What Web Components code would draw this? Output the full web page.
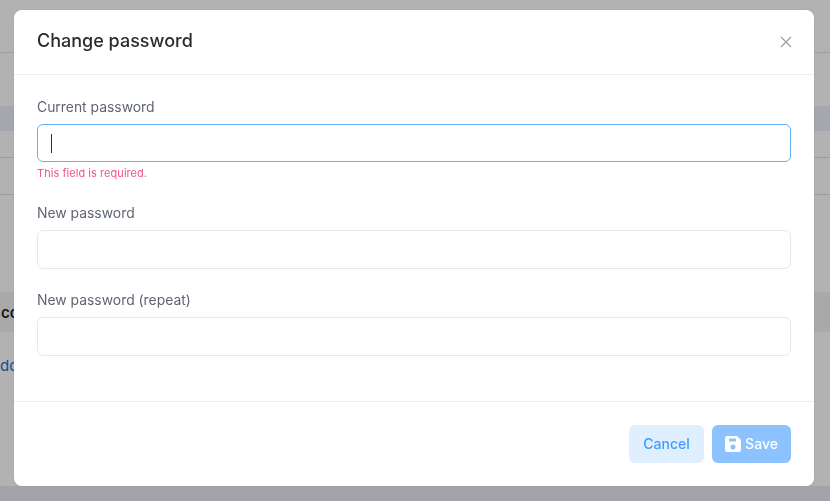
<!DOCTYPE html>
<html>
<head>
<meta charset="utf-8">
<title>Change password</title>
<style>
    html, body { margin: 0; height: 100%; overflow: hidden; }
    body { font-family: Inter, "Liberation Sans", sans-serif; background: #fff; }
</style>
</head>
<body>
<page-behind></page-behind>
<modal-dialog heading="Change password">
    <form-field label="Current password" error="This field is required." focused></form-field>
    <form-field label="New password"></form-field>
    <form-field label="New password (repeat)"></form-field>
    <app-button slot="footer" kind="light">Cancel</app-button>
    <app-button slot="footer" kind="primary" icon>Save</app-button>
</modal-dialog>

<script>
class PageBehind extends HTMLElement {
    constructor() {
        super();
        this.attachShadow({ mode: 'open' });
        this.shadowRoot.innerHTML = `
            <style>
                :host {
                    display: flex;
                    flex-direction: column;
                    height: 501px;
                    background: #fff;
                    overflow: hidden;
                }
                .nav { height: 52px; border-bottom: 1px solid #dfe3e6; }
                .gap { height: 53px; }
                .band { height: 25px; background: #edeff9; }
                .row { height: 26px; border-bottom: 1px solid #dfe3e6; }
                .row.tall { height: 36px; }
                .spacer { height: 97px; }
                .head {
                    height: 40px;
                    background: #f2f2f2;
                    display: flex;
                    align-items: center;
                    padding-left: 1px;
                    font: 600 15px Inter, sans-serif;
                    color: #222;
                }
                .link {
                    height: 154px;
                    padding: 24px 0 0 0;
                    box-sizing: border-box;
                    font: 15px/20px Inter, sans-serif;
                    color: #0f74d8;
                }
                .foot { flex: 1; background: #e9eaf3; }
            </style>
            <div class="nav"></div>
            <div class="gap"></div>
            <div class="band"></div>
            <div class="row"></div>
            <div class="row tall"></div>
            <div class="spacer"></div>
            <div class="head">co</div>
            <div class="link">do</div>
            <div class="foot"></div>
        `;
    }
}

class ModalDialog extends HTMLElement {
    constructor() {
        super();
        this.attachShadow({ mode: 'open' });
        this.shadowRoot.innerHTML = `
            <style>
                :host {
                    position: fixed;
                    inset: 0;
                    display: block;
                    background: rgba(0, 0, 0, 0.3);
                    padding: 10px 16px 15px 14px;
                    box-sizing: border-box;
                }
                .card {
                    height: 476px;
                    background: #fff;
                    border-radius: 8px;
                    display: flex;
                    flex-direction: column;
                    box-shadow: 0 0 3px rgba(0, 0, 0, 0.08);
                }
                header {
                    height: 65px;
                    flex: none;
                    box-sizing: border-box;
                    border-bottom: 1px solid #eeeeee;
                    display: flex;
                    align-items: center;
                    justify-content: space-between;
                    padding: 0 22px 3px 23px;
                }
                h2 {
                    margin: 0;
                    font: 500 18px Inter, sans-serif;
                    color: #2b2b2b;
                }
                svg { display: block; margin-top: 2px; }
                main {
                    flex: 1;
                    padding: 22px 23px 0;
                    display: flex;
                    flex-direction: column;
                }
                footer {
                    height: 85px;
                    flex: none;
                    box-sizing: border-box;
                    border-top: 1px solid #eeeeee;
                    display: flex;
                    justify-content: flex-end;
                    gap: 8px;
                    padding: 23px 23px 0;
                }
            </style>
            <div class="card">
                <header>
                    <h2></h2>
                    <svg width="12" height="12" viewBox="0 0 12 12" fill="none" stroke="#9ca1a9" stroke-width="1.3">
                        <path d="M1 1l10 10M11 1L1 11"/>
                    </svg>
                </header>
                <main><slot></slot></main>
                <footer><slot name="footer"></slot></footer>
            </div>
        `;
        this.shadowRoot.querySelector('h2').textContent = this.getAttribute('heading');
    }
}

class FormField extends HTMLElement {
    constructor() {
        super();
        this.attachShadow({ mode: 'open' });
        this.shadowRoot.innerHTML = `
            <style>
                :host {
                    display: block;
                    height: 87px;
                }
                :host([error]) { height: 106px; }
                label {
                    display: block;
                    font: 400 13.9px/20px Inter, sans-serif;
                    color: #5f6573;
                    margin-bottom: 7px;
                }
                .box { position: relative; }
                input {
                    display: block;
                    width: 100%;
                    height: 39px;
                    box-sizing: border-box;
                    border: 1px solid #e6e9f0;
                    border-radius: 6px;
                    background: #fff;
                    outline: none;
                    padding: 0 13px;
                    font: 13px Inter, sans-serif;
                }
                :host([focused]) input { border-color: #66b0fa; height: 38px; }
                .caret {
                    position: absolute;
                    left: 14px;
                    top: 10px;
                    width: 1px;
                    height: 19px;
                    background: #2b2f38;
                }
                .error {
                    font: 400 11px/14px Inter, sans-serif;
                    letter-spacing: 0.05px;
                    color: #f2548f;
                    margin-top: 4px;
                }
            </style>
            <label></label>
            <div class="box"><input type="password"></div>
        `;
        this.shadowRoot.querySelector('label').textContent = this.getAttribute('label');
        const box = this.shadowRoot.querySelector('.box');
        if (this.hasAttribute('focused')) {
            const caret = document.createElement('div');
            caret.className = 'caret';
            box.appendChild(caret);
        }
        if (this.hasAttribute('error')) {
            const err = document.createElement('div');
            err.className = 'error';
            err.textContent = this.getAttribute('error');
            this.shadowRoot.appendChild(err);
        }
    }
}

class AppButton extends HTMLElement {
    constructor() {
        super();
        this.attachShadow({ mode: 'open' });
        this.shadowRoot.innerHTML = `
            <style>
                :host { display: block; }
                button {
                    height: 38px;
                    width: 75px;
                    border: none;
                    border-radius: 6px;
                    display: flex;
                    align-items: center;
                    justify-content: center;
                    gap: 4px;
                    padding: 0;
                    font: 550 14px/16px Inter, sans-serif;
                }
                :host([kind="light"]) button { background: #e0efff; color: #409cff; }
                :host([kind="primary"]) button { background: #8cc3ff; color: #fff; width: 79px; }
                svg { display: block; }
            </style>
            <button><slot></slot></button>
        `;
        if (this.hasAttribute('icon')) {
            const tpl = document.createElement('template');
            tpl.innerHTML = `
                <svg width="16" height="16" viewBox="0 0 16 16" fill="#fff">
                    <path fill-rule="evenodd" d="M2 0h10l4 4v10a2 2 0 0 1-2 2H2a2 2 0 0 1-2-2V2a2 2 0 0 1 2-2zM4 2.5v3h7v-3zM8 8.5a2.5 2.5 0 1 0 0 5 2.5 2.5 0 0 0 0-5z"/>
                </svg>`;
            this.shadowRoot.querySelector('button').prepend(tpl.content);
        }
    }
}

customElements.define('page-behind', PageBehind);
customElements.define('modal-dialog', ModalDialog);
customElements.define('form-field', FormField);
customElements.define('app-button', AppButton);
</script>
</body>
</html>
